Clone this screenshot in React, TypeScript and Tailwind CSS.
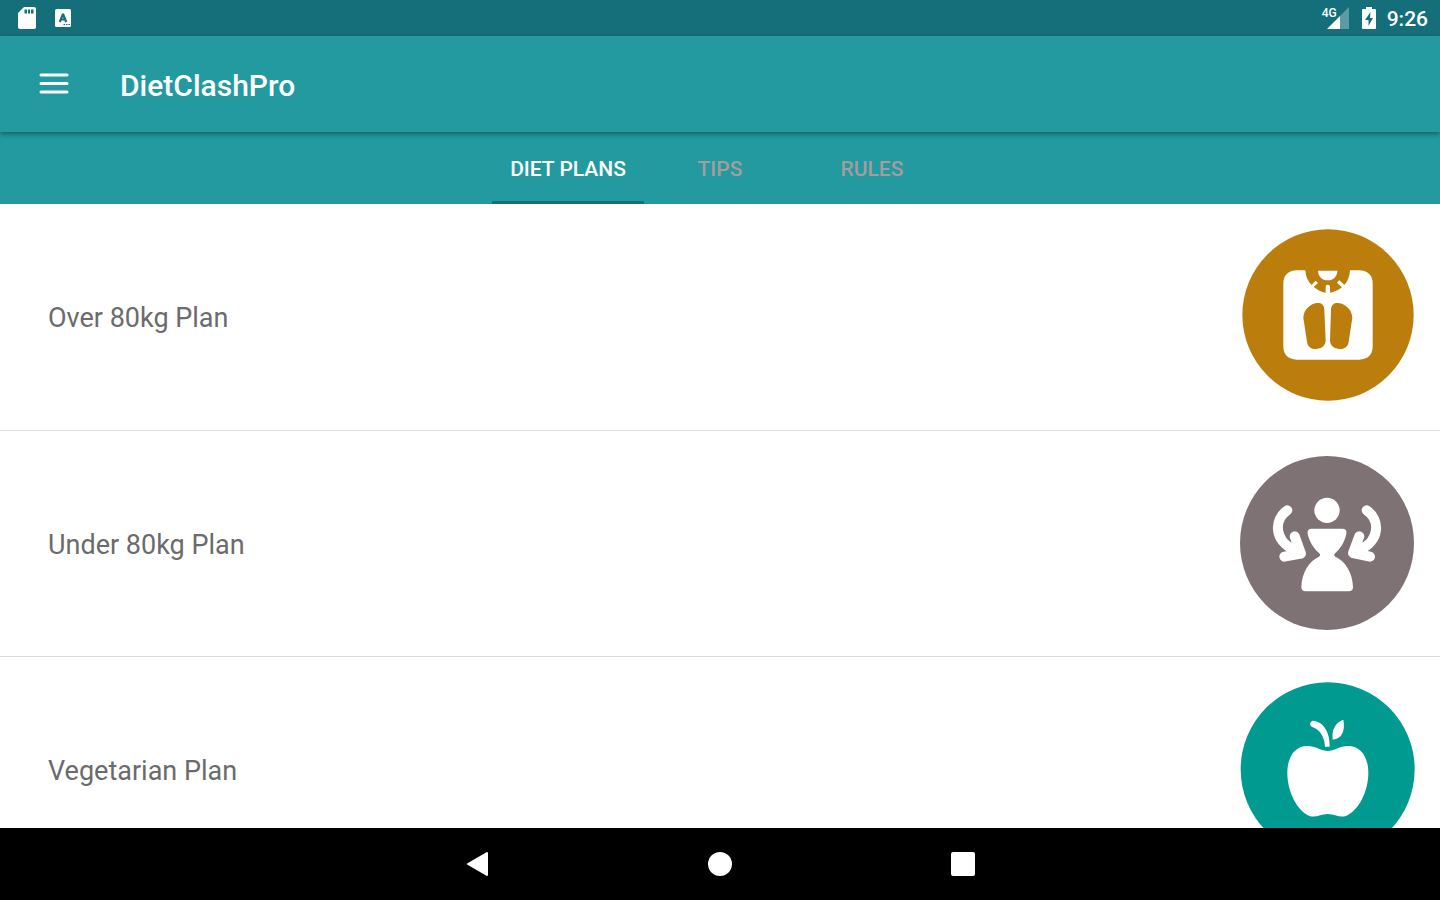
import { useState } from "react";
import type { ReactNode } from "react";

type Plan = {
  name: string;
  icon: ReactNode;
};

const tabs = ["DIET PLANS", "TIPS", "RULES"];

function ScaleIcon() {
  return (
    <svg viewBox="-6 -9 600 600" className="size-[200px]" aria-hidden="true">
      <circle cx="294" cy="285" r="257" fill="#bb7e0c" />
      <path
        d="M201 151H226C227 170 233 184 245 195L257 182L264 189L251 201C262 210 274 216 287 218V200Q287 194 293 194Q300 194 300 200V218C313 216 325 211 336 202L321 188L328 181L343 195C353 184 359 170 360 151H387Q428 153 428 191V379Q428 417 387 419H201Q160 417 160 379V191Q160 153 201 151Z"
        fill="#fff"
      />
      <path d="M264 152H322C321 171 309 181 293 181C277 181 265 171 264 152Z" fill="#fff" />
      <path
        d="M220 293C221 268 243 249 264 249C277 249 283 257 283 271L287 361C287 378 273 387 258 387C242 387 233 380 231 365Z"
        fill="#bb7e0c"
      />
      <path
        d="M367 293C366 268 343 249 322 249C309 249 303 257 303 271L300 361C300 378 314 387 329 387C344 387 354 380 356 365Z"
        fill="#bb7e0c"
      />
    </svg>
  );
}

function SlimIcon() {
  return (
    <svg viewBox="-6 -6 600 600" className="size-[200px]" aria-hidden="true">
      <circle cx="291" cy="291" r="261" fill="#7f7274" />
      <g fill="#fff">
        <circle cx="291" cy="193" r="38" />
        <path d="M243 248H339Q352 249 349 263C344 288 332 306 316 321Q309 327 316 332C346 345 368 381 369 423Q369 436 356 436H227Q214 436 214 423C215 381 237 345 267 332Q274 327 267 321C251 306 238 288 233 263Q231 249 243 248Z" />
        <path d="M187 285L215 325L172 325Z" />
        <path d="M395 285L367 325L410 325Z" />
      </g>
      <g
        fill="none"
        stroke="#fff"
        strokeWidth="30"
        strokeLinecap="round"
        strokeLinejoin="round"
      >
        <path d="M172 193C130 221 134 286 190 309" />
        <path d="M194 271L213 323L163 332" />
        <path d="M410 193C452 221 448 286 392 309" />
        <path d="M388 271L369 321L420 332" />
      </g>
    </svg>
  );
}

function AppleIcon() {
  return (
    <svg viewBox="-6 0 600 600" className="size-[200px]" aria-hidden="true">
      <circle cx="293" cy="298" r="261" fill="#019a90" />
      <g fill="#fff">
        <path d="M293 243C275 243 257 228 232 228C193 228 172 263 172 309C172 360 197 415 232 435C254 447 270 432 293 432C316 432 332 447 354 435C390 415 415 360 415 309C415 263 394 228 354 228C330 228 312 243 293 243Z" />
        <path d="M285 230C284 202 270 178 247 171C238 167 239 155 248 152C281 153 301 190 299 230Z" />
        <path d="M308 209C304 178 317 157 340 149C346 182 336 206 308 209Z" />
      </g>
    </svg>
  );
}

const plans: Plan[] = [
  { name: "Over 80kg Plan", icon: <ScaleIcon /> },
  { name: "Under 80kg Plan", icon: <SlimIcon /> },
  { name: "Vegetarian Plan", icon: <AppleIcon /> },
];

function StatusBar() {
  return (
    <div className="flex h-9 shrink-0 items-center justify-between bg-[#146f7a] pr-3 pl-[18px] text-white">
      <div className="flex items-center gap-[18px]">
        <svg viewBox="0 0 18 22" className="h-[22px] w-[18px]" aria-hidden="true">
          <path d="M6 0H16Q18 0 18 2V20Q18 22 16 22H2Q0 22 0 20V6Z" fill="#fff" />
          <path d="M6.5 2.5H9V6.5H6.5ZM10 2.5H12V6.5H10ZM13 2.5H15.5V6.5H13Z" fill="#146f7a" />
        </svg>
        <svg viewBox="0 0 18 18" className="size-[18px]" aria-hidden="true">
          <rect x="1" width="16" height="18" rx="1.5" fill="#fff" />
          <path
            d="M5.8 13L9 5L12.2 13M7 10.5H11"
            fill="none"
            stroke="#146f7a"
            strokeWidth="2.2"
            strokeLinejoin="bevel"
          />
          <path d="M9.5 15.5H16" stroke="#146f7a" strokeDasharray="1.5 1" />
        </svg>
      </div>
      <div className="flex items-center gap-[10px]">
        <div className="flex items-center">
          <span className="-mr-[10px] self-start text-[12px] leading-3 font-medium">4G</span>
          <svg viewBox="0 0 22 22" className="mr-[2px] size-[22px]" aria-hidden="true">
            <path d="M22 0V22H13V9Z" fill="#5b9ba3" />
            <path d="M0 22L13 9V22Z" fill="#fff" />
          </svg>
        </div>
        <svg viewBox="0 0 16 22" className="h-[22px] w-4" aria-hidden="true">
          <path d="M5 0H11V2H14Q15 2 15 3V21Q15 22 14 22H2Q1 22 1 21V3Q1 2 2 2H5Z" fill="#fff" />
          <path d="M9.5 5L4 13H7.5V19L12 11H9Z" fill="#146f7a" />
        </svg>
        <span className="pt-[2px] text-[21px] leading-6 font-medium">9:26</span>
      </div>
    </div>
  );
}

function NavBar() {
  return (
    <nav className="flex h-[72px] shrink-0 justify-center bg-black">
      <button type="button" aria-label="Back" className="flex w-[243px] items-center justify-center">
        <svg viewBox="0 0 24 26" className="h-[26px] w-6" aria-hidden="true">
          <path
            d="M22 2V24L3 13Z"
            fill="#fff"
            stroke="#fff"
            strokeWidth="2"
            strokeLinejoin="round"
          />
        </svg>
      </button>
      <button type="button" aria-label="Home" className="flex w-[243px] items-center justify-center">
        <span className="size-6 rounded-full bg-white" />
      </button>
      <button type="button" aria-label="Recent apps" className="flex w-[243px] items-center justify-center">
        <span className="size-6 rounded-[2px] bg-white" />
      </button>
    </nav>
  );
}

export default function App() {
  const [activeTab, setActiveTab] = useState(tabs[0]);

  return (
    <div className="flex h-screen flex-col bg-white font-[Roboto,sans-serif]">
      <StatusBar />
      <header className="z-10 flex h-24 shrink-0 items-center bg-[#229a9f] pl-[39px] shadow-[0_2px_5px_rgba(0,0,0,0.4)]">
        <button type="button" aria-label="Open menu" className="mr-[51px]">
          <svg viewBox="0 0 30 24" className="h-6 w-[30px]" aria-hidden="true">
            <path d="M2 3H28M2 11.5H28M2 20H28" stroke="#fff" strokeWidth="3" strokeLinecap="round" />
          </svg>
        </button>
        <h1 className="pt-[3px] text-[30px] leading-9 font-medium text-white">DietClashPro</h1>
      </header>
      <div role="tablist" className="flex h-[72px] shrink-0 justify-center bg-[#229a9f]">
        {tabs.map((tab) => (
          <button
            key={tab}
            type="button"
            role="tab"
            aria-selected={tab === activeTab}
            onClick={() => setActiveTab(tab)}
            className={
              tab === activeTab
                ? "w-[152px] border-b-3 border-[#146f7a] pt-[5px] text-[21px] leading-6 font-medium text-white"
                : "w-[152px] border-b-3 border-transparent pt-[5px] text-[21px] leading-6 font-medium text-[#a39d9d]"
            }
          >
            {tab}
          </button>
        ))}
      </div>
      <main className="min-h-0 flex-1 overflow-hidden">
        <ul>
          {plans.map((plan) => (
            <li key={plan.name} className="h-[226px] border-t border-[#dcdcdc] first:border-t-0">
              <a href="#" className="flex h-full items-center justify-between pr-3 pl-12">
                <span className="pt-[2px] text-[27px] leading-8 text-[#6b6b6b]">{plan.name}</span>
                {plan.icon}
              </a>
            </li>
          ))}
        </ul>
      </main>
      <NavBar />
    </div>
  );
}
